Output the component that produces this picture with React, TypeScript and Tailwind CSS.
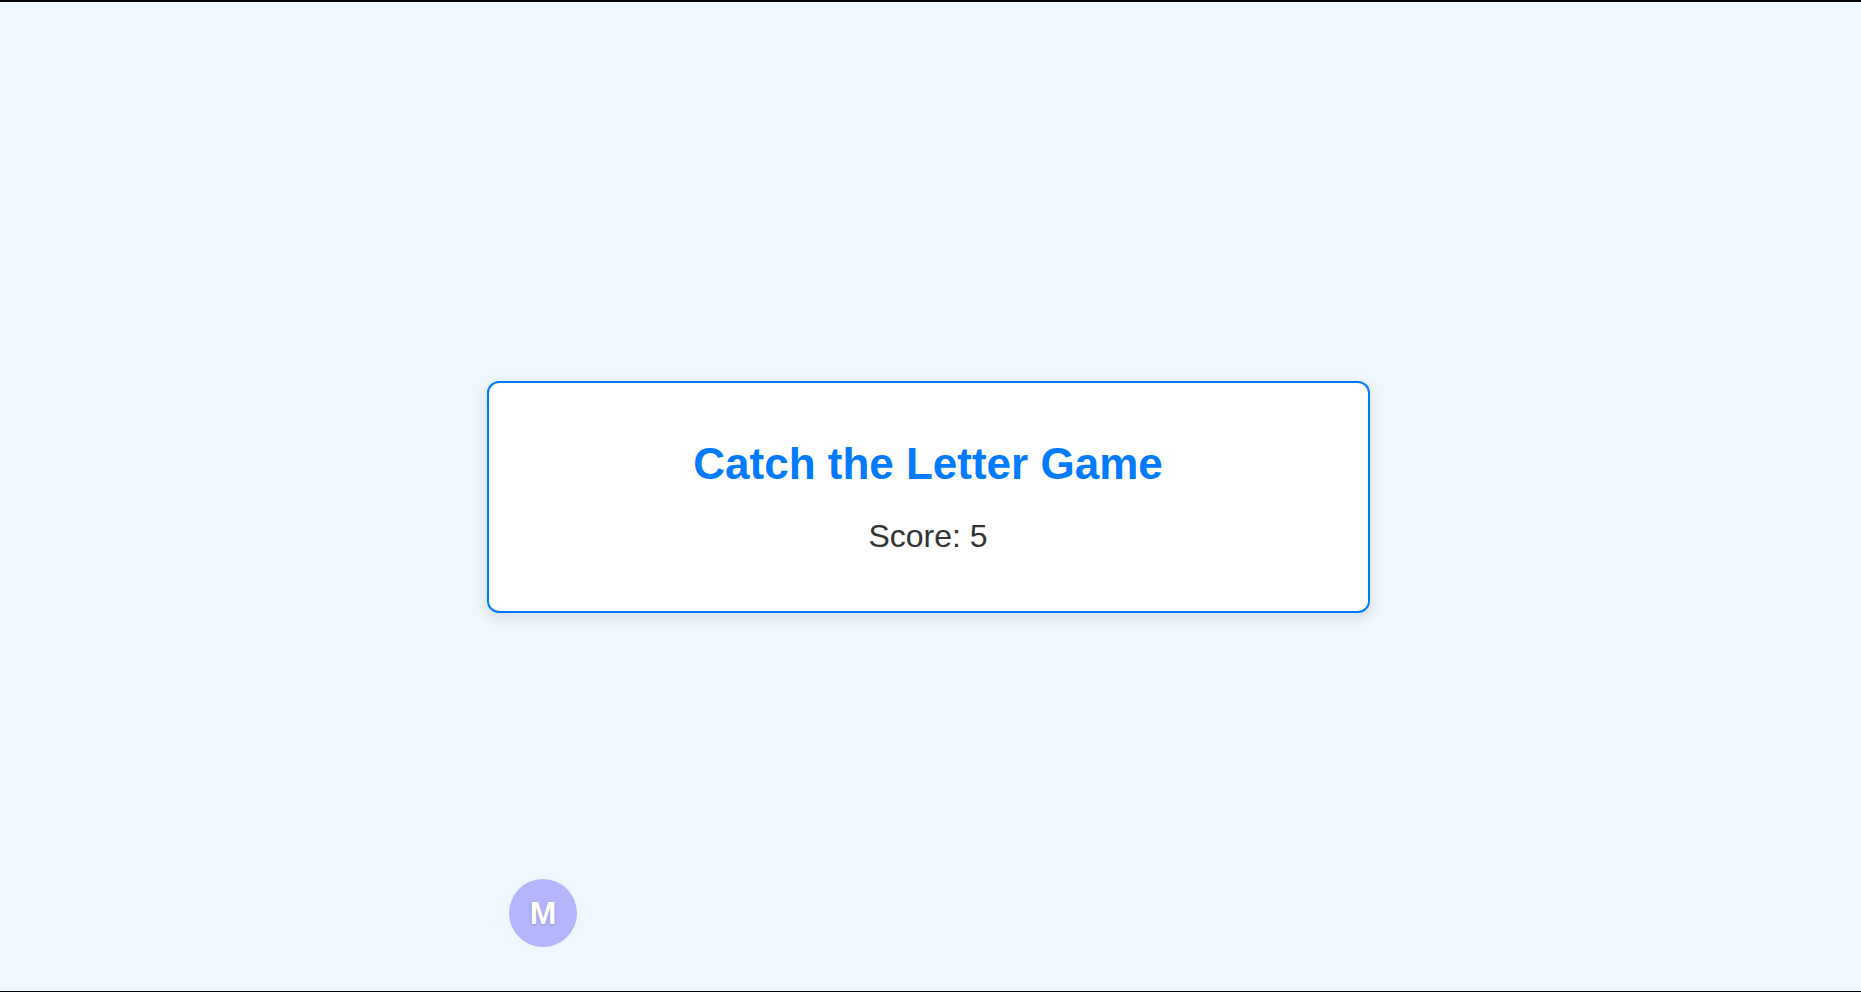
export default function App() {
  return (
    <div
      className="relative h-[992px] w-full overflow-hidden border-t-2 border-b border-black bg-[#eff7ff] flex items-center justify-center"
      style={{ fontFamily: '"Liberation Sans", Arial, sans-serif' }}
    >
      <div className="mr-[5px] w-[883px] h-[232px] rounded-[12px] border-2 border-[#007bff] bg-white shadow-[0_4px_14px_rgba(0,0,0,0.12)] flex flex-col items-center pt-[55px]">
        <h1 className="text-[44px] leading-[51px] font-bold text-[#007bff]">
          Catch the Letter Game
        </h1>
        <p className="mt-[29px] text-[32px] leading-[37px] text-[#333]">Score: 5</p>
      </div>

      <div className="absolute left-[509px] top-[877px] w-[68px] h-[68px] rounded-full bg-[#b5b5fd] flex items-center justify-center">
        <span className="text-[32px] font-bold text-white [text-shadow:0_1px_3px_rgba(0,0,0,0.2)]">M</span>
      </div>
    </div>
  );
}
